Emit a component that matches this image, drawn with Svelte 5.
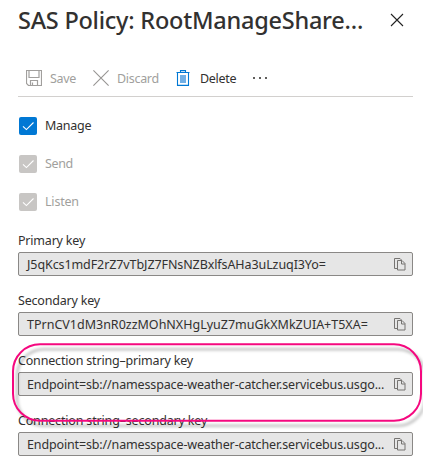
<script>
  const permissions = [
    { name: 'Manage', enabled: true, spacing: -0.25 },
    { name: 'Send', enabled: false, spacing: -0.35 },
    { name: 'Listen', enabled: false, spacing: -0.2 }
  ];
  const fields = [
    { label: 'Primary key', value: 'J5qKcs1mdF2rZ7vTbJZ7FNsNZBxlfsAHa3uLzuqI3Yo=', ls: -0.2, vs: -0.09 },
    { label: 'Secondary key', value: 'TPrnCV1dM3nR0zzMOhNXHgLyuZ7muGkXMkZUIA+T5XA=', ls: -0.2, vs: 0 },
    { label: 'Connection string–primary key', value: 'Endpoint=sb://namesspace-weather-catcher.servicebus.usgo...', ls: -0.18, vs: -0.14 },
    { label: 'Connection string–secondary key', value: 'Endpoint=sb://namesspace-weather-catcher.servicebus.usgo...', ls: -0.17, vs: -0.14 }
  ];
</script>

<main class="panel">
  <header>
    <h1>SAS Policy: RootManageShare...</h1>
    <button class="close" aria-label="Close">
      <svg width="14" height="14" viewBox="0 0 14 14"><path d="M1 1L13 13M13 1L1 13" stroke="#222" stroke-width="1.1" fill="none" /></svg>
    </button>
  </header>

  <div class="toolbar">
    <button class="off save">
      <svg width="16" height="16" viewBox="0 0 16 16" fill="none" stroke="#a19f9d">
        <path d="M.5 .5H15.5V15.5H2.5L.5 13.5Z M3 .5V7.5H13V.5 M4.5 15.5V10.5H11.5V15.5 M6.5 12.5V15.5" stroke-width="1.2" />
      </svg>
      <span>Save</span>
    </button>
    <button class="off discard">
      <svg width="16" height="16" viewBox="0 0 16 16"><path d="M.4 .4L15.6 15.6M15.6 .4L.4 15.6" stroke="#979593" stroke-width="1.1" /></svg>
      <span>Discard</span>
    </button>
    <button class="delete">
      <svg width="14" height="16" viewBox="0 0 14 16" fill="none">
        <path d="M4 5H10V13H4Z" fill="#71afe5" />
        <path d="M.5 2.5H13.5M4.5 2.5V.6H9.5V2.5M1.5 2.5V15.4H12.5V2.5" stroke="#0078d4" stroke-width="1.1" />
      </svg>
      <span>Delete</span>
    </button>
    <button class="more" aria-label="More">
      <svg width="15" height="2" viewBox="0 0 15 2" fill="#605e5c"><path d="M0 0H2V2H0ZM6 0H8V2H6ZM12 0H14V2H12Z" /></svg>
    </button>
  </div>

  <section class="permissions">
    {#each permissions as p}
      <div class="permission" class:off={!p.enabled}>
        <span class="box"><svg width="18" height="18" viewBox="0 0 18 18"><path d="M4 9.3L7.4 12.6L14.5 5.5" fill="none" stroke="#fff" stroke-width="1.1" /></svg></span>
        <span style:letter-spacing="{p.spacing}px">{p.name}</span>
      </div>
    {/each}
  </section>

  <section class="fields">
    {#each fields as f}
      <div class="field">
        <div class="label" style:letter-spacing="{f.ls}px">{f.label}</div>
        <div class="input">
          <span style:letter-spacing="{f.vs}px">{f.value}</span>
          <svg width="12" height="13" viewBox="0 0 12 13" fill="none" stroke="#767472">
            <path d="M3.5 10.5H.5V.5H6L7.5 2M3.5 2.5H8L11 5.5V12H3.5ZM7.5 2.5V6H11" />
          </svg>
        </div>
      </div>
    {/each}
  </section>

  <svg class="highlight" width="423" height="110" viewBox="0 0 423 110">
    <rect x="13" y="9.3" width="408" height="76.4" rx="27" fill="none" stroke="#f5087f" stroke-width="2" />
  </svg>
</main>

<style>
  :global(body) { background: #fff; overflow: hidden; }
  .panel {
    position: relative;
    box-sizing: border-box;
    width: 423px;
    height: 472px;
    padding: 0 10px 0 18px;
    overflow: hidden;
    background: #fff;
    color: #323130;
    font: 12.5px/18px "Noto Sans", sans-serif;
  }
  header { display: flex; height: 40px; align-items: center; justify-content: space-between; }
  h1 { margin: 0; font-size: 23.5px; line-height: 32px; font-weight: 500; letter-spacing: -0.24px; white-space: nowrap; }
  button { display: flex; align-items: center; padding: 0; border: 0; background: none; color: inherit; font: inherit; }
  .close { margin-right: 9px; }
  svg { display: block; flex: none; }
  .toolbar { display: flex; align-items: center; box-sizing: border-box; height: 57px; padding: 19px 0 0 8px; border-bottom: 1px solid #d2d0ce; }
  .toolbar button { gap: 8px; letter-spacing: -0.3px; }
  .toolbar span { padding-top: 2px; }
  .toolbar .off { color: #a19f9d; }
  .save { width: 67px; }
  .discard { width: 83px; }
  .toolbar .delete { width: 77px; gap: 10px; }
  .permissions { padding-top: 20px; }
  .permission { display: flex; align-items: center; height: 18px; margin: 0 0 20px 1px; gap: 8px; }
  .permission.off { color: #a19f9d; }
  .box { width: 18px; height: 18px; border-radius: 2px; background: #0078d4; }
  .off .box { background: #c8c6c4; }
  .field { height: 60px; }
  .label { box-sizing: border-box; height: 21px; padding-top: 1px; line-height: 18px; white-space: nowrap; }
  .input { display: flex; align-items: center; justify-content: space-between; box-sizing: border-box; height: 24px; padding: 0 6px 0 8px; border: 1px solid #8a8886; border-radius: 2px; background: #e6e6e6; white-space: nowrap; }
  .input span { padding-top: 2px; }
  .highlight { position: absolute; top: 335px; left: 0; filter: drop-shadow(4px 5px 1.5px rgba(0, 0, 0, 0.3)); }
</style>
